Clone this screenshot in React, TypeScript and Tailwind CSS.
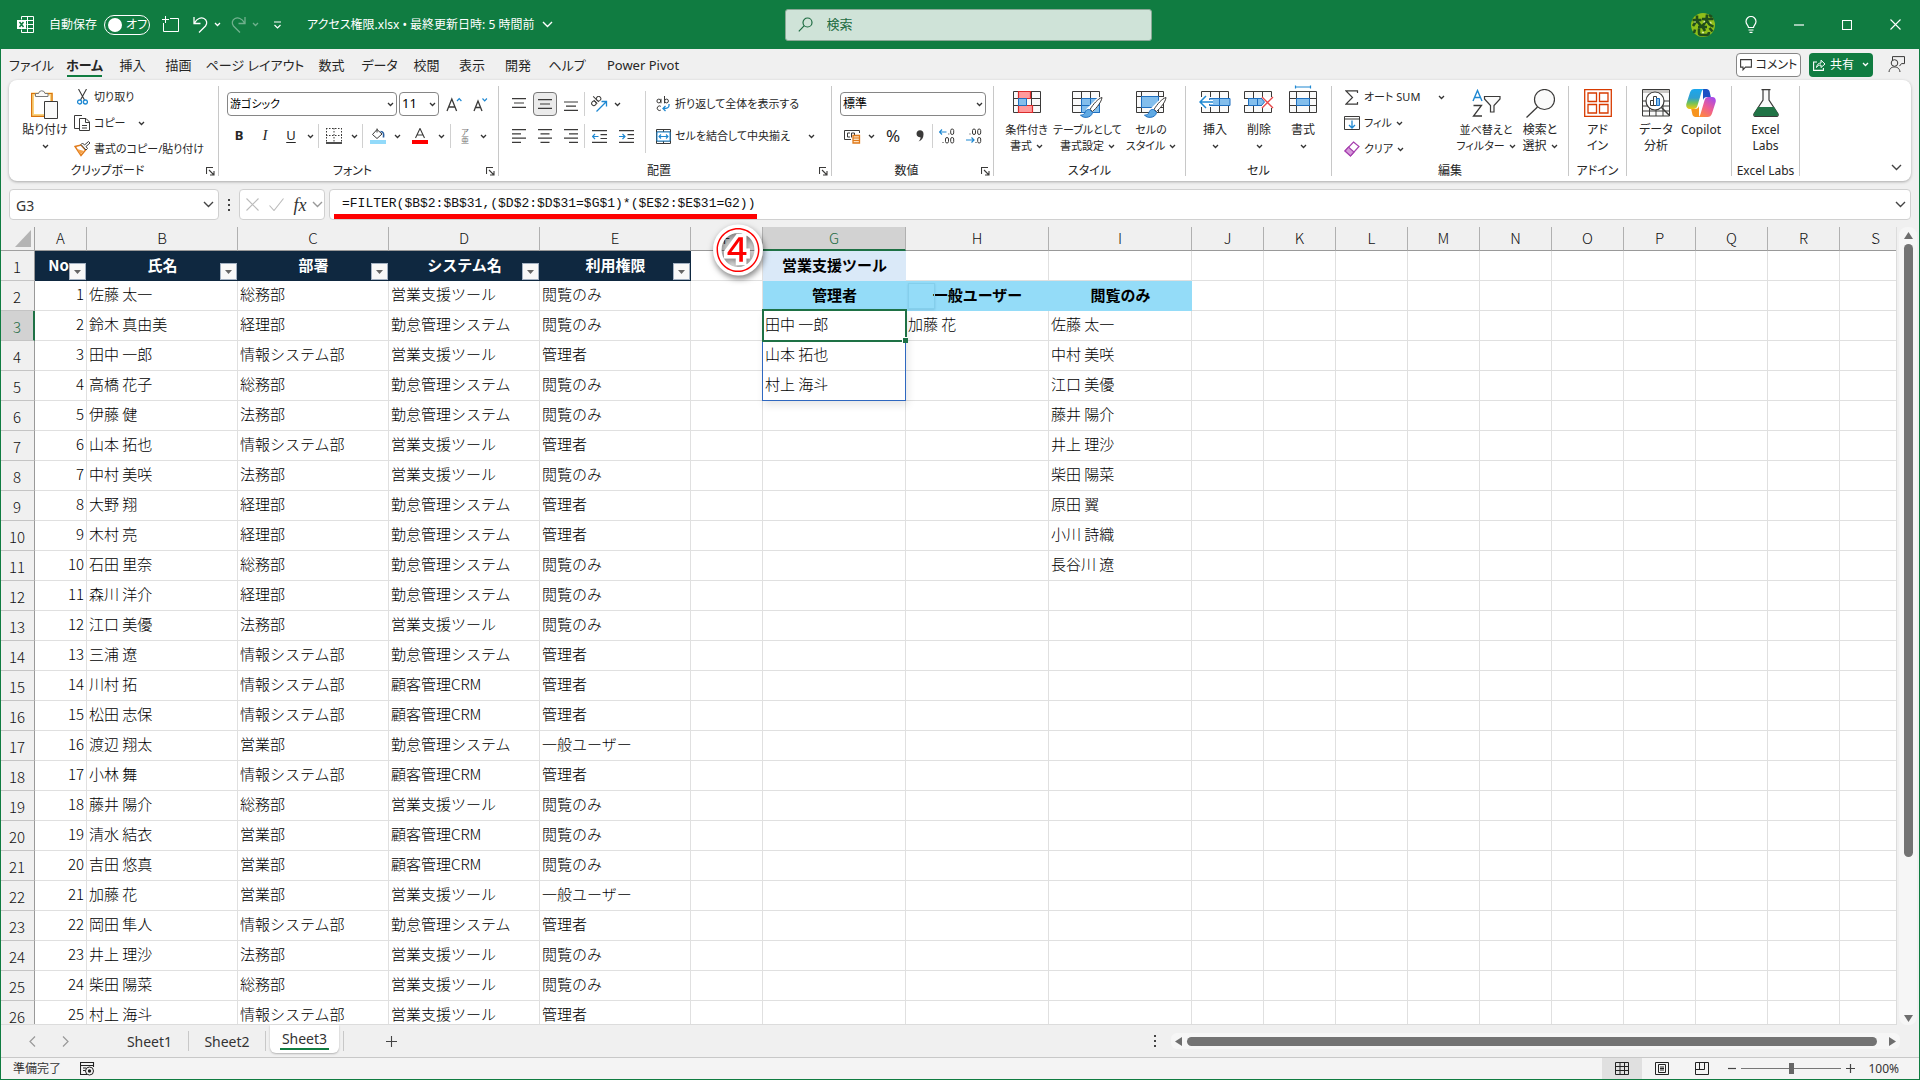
import React from "react";

type Kids = { children?: React.ReactNode };

/* ---------- icons ---------- */

function Svg({ w, h, children, className = "" }: { w: number; h: number; className?: string } & Kids) {
  return (
    <svg width={w} height={h} viewBox={`0 0 ${w} ${h}`} fill="none" className={`shrink-0 ${className}`} aria-hidden="true">
      {children}
    </svg>
  );
}

const INK = "#3b3a39";
const BLUE = "#1e88d2";

function Chev({ className = "text-[#333]" }: { className?: string }) {
  return (
    <Svg w={7} h={5} className={className}>
      <path d="M1 1l2.5 2.5L6 1" stroke="currentColor" strokeWidth="1.3" />
    </Svg>
  );
}

function WideChev({ className = "text-[#444]" }: { className?: string }) {
  return (
    <Svg w={11} h={7} className={className}>
      <path d="M1 1l4.5 4.5L10 1" stroke="currentColor" strokeWidth="1.4" />
    </Svg>
  );
}

const ExcelLogo = () => (
  <Svg w={17} h={17}>
    <path d="M4.5 3.5V.5h12v16h-12v-3M10.500 .5v16M4.500 4.500h12M9.500 8.500h7M9.500 12.500h7" stroke="#fff" />
    <path d="M0 4h9v9H0z" fill="#fff" />
    <path d="M2.500 6l4 5M6.500 6l-4 5" stroke="#107c41" strokeWidth="1.500" />
  </Svg>
);
const NewWindow = () => (
  <Svg w={17} h={17}>
    <path d="M8 2.500h8.500v13h-15V7M3.500 0v7M0 3.500h7" stroke="#fff" />
  </Svg>
);
const Undo = ({ flip = false }: { flip?: boolean }) => (
  <Svg w={15} h={17} className={flip ? "-scale-x-100 opacity-40" : ""}>
    <path d="M1 1v6.500h6.500M1.500 7C4 2.500 8 1 11 2.500c3 1.500 3.500 5 1.500 7.500L6 16.500" stroke="#fff" strokeWidth="1.300" />
  </Svg>
);
const Bulb = () => (
  <Svg w={12} h={17}>
    <path d="M3.500 11.500C3.500 9.500 1 8.500 1 5.500a5 5 0 0110 0c0 3-2.500 4-2.500 6zM3.500 14h5M4.500 16.300h3" stroke="#fff" strokeWidth="1.200" />
  </Svg>
);
const SearchGlyph = () => (
  <Svg w={15} h={15}>
    <circle cx="9.500" cy="5.500" r="4.500" stroke="#1d6b41" strokeWidth="1.200" />
    <path d="M6.300 8.700L.8 14.300" stroke="#1d6b41" strokeWidth="1.200" />
  </Svg>
);
const Paste = () => (
  <Svg w={28} h={30}>
    <path d="M1.500 5h19v21.500h-19z" fill="#fff" stroke="#f9d27e" strokeWidth="3" />
    <path d="M.6 4.500h21M.6 27.400h13M.6 4v24M21 4v8" stroke="#d9730d" strokeWidth="1.200" />
    <path d="M4.500 7.500V4.500h3a3.300 3.300 0 016.500 0h3v3z" fill="#fafafa" stroke="#7a7a7a" />
    <path d="M13.500 12.500h13v17h-13z" fill="#fafafa" stroke={INK} />
  </Svg>
);
const Cut = () => (
  <Svg w={11} h={16}>
    <path d="M1.500 0l6 11M9.500 0l-6 11" stroke={INK} strokeWidth="1.100" />
    <circle cx="2.600" cy="13" r="2" stroke={BLUE} strokeWidth="1.300" />
    <circle cx="8.400" cy="13" r="2" stroke={BLUE} strokeWidth="1.300" />
  </Svg>
);
const Copy = () => (
  <Svg w={17} h={17}>
    <path d="M5 13.500H.5V.500H8" stroke={INK} />
    <path d="M5.500 3.500H12l3.500 3.500v8.500h-10zM11.500 3.500v4h4M8 10.500h5M8 13h5" stroke={INK} />
  </Svg>
);
const Painter = () => (
  <Svg w={17} h={16}>
    <path d="M1 5.500l6-1.500 4.500 5L7 14.500z" fill="#fff" stroke="#e07a1a" strokeWidth="1.500" />
    <path d="M3 8l3.500 5.500L10 10z" fill="#f5a34a" />
    <path d="M7 3.500l5 5.500 1.500-1.500-1.500-2L16 2 14.500.500 10.500 4 8.500 2z" fill="#fff" stroke={INK} />
  </Svg>
);
const Launcher = () => (
  <Svg w={9} h={9}>
    <path d="M.5 7V.5H7M3 3l4.500 4.500M8 4v4H4" stroke={INK} strokeWidth="1.100" />
  </Svg>
);
const Borders = () => (
  <Svg w={16} h={16}>
    <path d="M0 .5h16M.5 0v14M15.500 0v14M8 0v14M0 7.500h16" stroke={INK} strokeDasharray="1.500 1.500" />
    <path d="M0 15h16" stroke="#222" strokeWidth="1.600" />
  </Svg>
);
const Fill = () => (
  <Svg w={16} h={16}>
    <path d="M7 1.500l5 4.500-5 4.500-4.500-4zM7 .5v4" stroke={INK} />
    <path d="M10.500 3.500c3 0 3.500 2 3 6" stroke="#2b5f9e" strokeWidth="1.600" />
    <path d="M0 12h16v4H0z" fill="#92dafa" />
  </Svg>
);
const FontColor = () => (
  <Svg w={16} h={16}>
    <path d="M3.500 10L8 .5l4.500 9.500M5 7h6" stroke={INK} strokeWidth="1.100" />
    <path d="M0 12h16v4H0z" fill="#f00" />
  </Svg>
);

function Lines({ d }: { d: string }) {
  return (
    <Svg w={14} h={14}>
      <path d={d} stroke={INK} strokeWidth="1.200" />
    </Svg>
  );
}
const Orient = () => (
  <Svg w={17} h={16}>
    <g transform="rotate(-45 5 6)" stroke={INK}>
      <circle cx="2.500" cy="5.500" r="2.200" />
      <path d="M4.800 3v5M7 0v8" />
      <circle cx="9.200" cy="5.500" r="2.200" />
    </g>
    <path d="M5.500 15.500L15 6M10.500 5.500h5v5" stroke={BLUE} strokeWidth="1.300" />
  </Svg>
);
const Indent = ({ right = false }: { right?: boolean }) => (
  <Svg w={15} h={13}>
    <path d="M0 .6h15M8.500 4.600H15M8.500 8.500H15M0 12.400h15" stroke={INK} strokeWidth="1.200" />
    <path d={right ? "M0 6.500h6M3.500 4l2.500 2.500L3.500 9" : "M.5 6.500h6M3 4L.5 6.500 3 9"} stroke={BLUE} strokeWidth="1.200" />
  </Svg>
);
const Wrap = () => (
  <Svg w={14} h={16}>
    <circle cx="2.800" cy="5" r="1.900" stroke={INK} />
    <path d="M5 2.800v4.500M8.500 0v7.300" stroke={INK} />
    <circle cx="10.500" cy="5" r="1.900" stroke={INK} />
    <path d="M4.800 10.300a2.300 2.300 0 100 3.800" stroke={INK} />
    <path d="M13 8c.5 4-2 4.500-6 4.500M9.500 10L7 12.500 9.500 15" stroke={BLUE} strokeWidth="1.300" />
  </Svg>
);
const Merge = () => (
  <Svg w={15} h={15}>
    <path d="M.5.5h14v14H.5zM7.500 0v3M7.500 12v3M0 3h15M0 12h15" stroke={INK} />
    <path d="M1 3h13v9H1z" fill="#fff" stroke={BLUE} />
    <path d="M3 7.500h9M5 5.500l-2 2 2 2M10 5.500l2 2-2 2" stroke={BLUE} strokeWidth="1.100" />
  </Svg>
);
const Currency = () => (
  <Svg w={17} h={15}>
    <path d="M7 10.500H.5v-9h15V4" stroke={INK} />
    <path d="M6 4H3.500v4H6M7.500 8.500V4h3v2.500" stroke={INK} />
    <path d="M9 6.500h6.500v7.500H9z" fill="#fde0bf" stroke="#e07a1a" strokeWidth="1.300" />
    <path d="M9 9h6.500M9 11.500h6.500" stroke="#e07a1a" strokeWidth="1.200" />
  </Svg>
);
const Decimals = ({ less = false }: { less?: boolean }) => (
  <svg width="16" height="16" viewBox="0 0 16 16" fill="none" className="shrink-0" aria-hidden="true">
    <path d={less ? "M0 12h8M5.500 9.500L8 12l-2.500 2.500" : "M.5 4h7M3 1.500L.5 4 3 6.500"} stroke={BLUE} strokeWidth="1.200" />
    <g stroke={INK}>
      {less ? (
        <>
          <rect x="6.500" y="1" width="3" height="5.500" rx="1.500" />
          <rect x="11.700" y="1" width="3" height="5.500" rx="1.500" />
          <rect x="11.700" y="9.500" width="3" height="5.500" rx="1.500" />
        </>
      ) : (
        <>
          <rect x="11.700" y="1" width="3" height="5.500" rx="1.500" />
          <rect x="6.500" y="9.500" width="3" height="5.500" rx="1.500" />
          <rect x="11.700" y="9.500" width="3" height="5.500" rx="1.500" />
        </>
      )}
    </g>
    <path d={less ? "M3.500 6h1M9.500 14.500h1" : "M9.300 6h1M3.500 14.500h1"} stroke={INK} strokeWidth="1.200" />
  </svg>
);

const GRID = "M.5 2.500h27v21H.5zM0 9.500h28M0 16.500h28M9.500 2.500v21M18.500 2.500v21";
const CondFormat = () => (
  <Svg w={28} h={28}>
    <path d={GRID} fill="#fafafa" stroke={INK} />
    <path d="M5.500 2.500h12v7h-12zM5.500 16.500h14v7h-14z" fill="#ff9a9c" stroke="#d92c2c" strokeWidth="1.200" />
    <path d="M5.500 9.500h8v7h-8z" fill="#83beec" stroke="#1e6fc0" />
  </Svg>
);
const Brush = () => (
  <>
    <path d="M29 9.500L19 23l-3-2.500L26.500 10z" fill="#fff" stroke="#fff" strokeWidth="3" />
    <path d="M30 8.500c-4 1-9 7-12 12l2.500 2C24.500 19 29.500 13 30 8.500z" fill="#fff" stroke={INK} />
    <path d="M17.500 20.500c-4-.5-4 2.500-5 4-1 1.200-2.500 1.500-4 1.500 2 3.500 11 3.500 12-2.500z" fill="#5fa9e3" stroke="#1e6fc0" />
  </>
);
const TableFormat = () => (
  <Svg w={31} h={30}>
    <path d={GRID} fill="#fafafa" stroke={INK} />
    <path d="M9.500 9.500h18v14h-18zM9.500 16.500h18M18.500 9.500v14" fill="#83beec" stroke="#1e6fc0" />
    <Brush />
  </Svg>
);
const CellStyle = () => (
  <Svg w={31} h={30}>
    <path d="M.5 2.500h27v21H.5zM0 7.500h28M0 18.500h28M5.500 2.500v21M22.500 2.500v21" fill="#fafafa" stroke={INK} />
    <path d="M5.500 7.500h17v11h-17z" fill="#83beec" stroke="#1e6fc0" />
    <Brush />
  </Svg>
);
const InsertCells = () => (
  <Svg w={32} h={28}>
    <path d="M2.500 2.500h27v21h-27zM2.500 9.500h27M2.500 16.500h27M11.500 2.500v21M20.500 2.500v21" fill="#fafafa" stroke={INK} />
    <path d="M1 8h12v10H1z" fill="#fff" />
    <path d="M10.500 9.500h20.500v7H10.500zM20.500 9.500v7" fill="#83beec" stroke="#1e6fc0" />
    <path d="M1 13h13M7 7l-6 6 6 6" stroke="#fff" strokeWidth="4" />
    <path d="M1 13h13M7 7l-6 6 6 6" stroke={BLUE} strokeWidth="1.500" />
  </Svg>
);
const DeleteCells = () => (
  <Svg w={30} h={28}>
    <path d="M.5 2.500h27v21H.5zM.5 9.500h27M.5 16.500h27M9.500 2.500v7M18.500 2.500v7M9.500 16.500v7M18.500 16.500v7" fill="#fafafa" stroke={INK} />
    <path d="M0 10h5v6H0zM18 8h12v11H18z" fill="#fff" />
    <path d="M4.500 9.500h13l3 3.500-3 3.500h-13zM13.500 9.500v7" fill="#83beec" stroke="#1e6fc0" />
    <path d="M18 8l11 11M29 8L18 19" stroke="#e8484a" strokeWidth="1.400" />
  </Svg>
);
const FormatCells = () => (
  <Svg w={28} h={32} className="-mt-1">
    <path d="M.5 6.500h27v21H.5zM0 13.500h28M0 20.500h28M7.500 6.500v21M20.500 6.500v21" fill="#fafafa" stroke={INK} />
    <path d="M7.500 13.500h13v7h-13z" fill="#83beec" stroke="#1e6fc0" />
    <path d="M6.500 2h15M6.500 .5v3M21.500 .5v3" stroke={BLUE} strokeWidth="1.200" />
  </Svg>
);
const Sigma = () => (
  <Svg w={14} h={15}>
    <path d="M12.500 3V.8H1L7.500 7.500 1 14.200h11.500V12" stroke={INK} strokeWidth="1.200" />
  </Svg>
);
const FillDown = () => (
  <Svg w={16} h={14}>
    <path d="M.5.5h15v13H.5zM0 3h16" stroke={INK} />
    <path d="M8 4.500v7M5 9l3 3 3-3" stroke={BLUE} strokeWidth="1.300" />
  </Svg>
);
const Eraser = () => (
  <Svg w={16} h={16}>
    <path d="M9.500 1l5.500 4.500L6.500 15 1 10z" fill="#fff" stroke="#a63fae" strokeWidth="1.200" />
    <path d="M1 10l3.500-4 5.500 5-3.500 4z" fill="#d79adb" stroke="#a63fae" strokeWidth="1.200" />
  </Svg>
);
const SortFilter = () => (
  <Svg w={29} h={28}>
    <path d="M1 12L5.500 1.500 10 12M2.500 8.500h6" stroke={BLUE} strokeWidth="1.400" />
    <path d="M1.500 16.500h8L1.500 27h8.500" stroke={INK} strokeWidth="1.300" />
    <path d="M12.500 7.500h15.500v2.500l-6 6.500v6.500h-3.500v-6.500l-6-6.500z" fill="#fafafa" stroke={INK} strokeWidth="1.200" />
  </Svg>
);
const FindBig = () => (
  <Svg w={29} h={29}>
    <circle cx="18.500" cy="10.500" r="10" fill="#fafafa" stroke={INK} strokeWidth="1.200" />
    <path d="M11.500 18L.5 28.500" stroke={INK} strokeWidth="1.300" />
  </Svg>
);
const Addins = () => (
  <Svg w={28} h={28}>
    <path d="M.7.700h26.600v26.600H.7zM4 4h8.500v8.500H4zM15.500 4H24v8.500h-8.500zM4 15.500h8.500V24H4zM15.500 15.500H24V24h-8.500z" stroke="#d83b01" strokeWidth="1.300" />
  </Svg>
);
const Analyze = () => (
  <Svg w={28} h={28}>
    <path d="M.5.5h27v26.500H.5zM.5 12h27M.5 17h27M.5 22h27M7.500 17v10M14 17v10M21 17v10" fill="#fafafa" stroke={INK} />
    <path d="M1 1h26v3H1z" fill="#c9c7c5" />
    <circle cx="13" cy="12" r="9" fill="#fff" stroke={INK} strokeWidth="1.200" />
    <path d="M8.500 11.500h3v5h-3zM11.500 7.500h3v9h-3z" stroke={INK} />
    <path d="M14.500 9.500h3v7h-3z" fill="#83beec" stroke="#1e6fc0" />
    <path d="M19.500 18.500l8 8" stroke={INK} strokeWidth="1.500" />
  </Svg>
);
const Copilot = () => (
  <svg width="30" height="28" viewBox="0 0 30 28" className="shrink-0" aria-hidden="true">
    <defs>
      <linearGradient id="cpA" x1="0" y1="0" x2="0" y2="1">
        <stop offset="0" stopColor="#1aa7ee" />
        <stop offset=".45" stopColor="#2f9fd0" />
        <stop offset=".7" stopColor="#6fc25a" />
        <stop offset="1" stopColor="#f2c80f" />
      </linearGradient>
      <linearGradient id="cpB" x1=".8" y1="0" x2=".2" y2="1">
        <stop offset="0" stopColor="#a64bea" />
        <stop offset=".5" stopColor="#ee5d93" />
        <stop offset="1" stopColor="#ff8a3c" />
      </linearGradient>
    </defs>
    <path d="M17 0h3.500c1.500 0 2.700 1 3.100 2.500L24.800 8H21c-2 0-3.500 1-4 3z" fill="#1b4fc4" />
    <path d="M8.500 0H18c-1.500.5-2 1.500-2.500 3l-4 13.500c-.5 2-1.800 3.500-4 3.500H3.800C.8 20-.3 17.500.4 14.800L4 3.500C4.800 1 6.300 0 8.500 0z" fill="url(#cpA)" />
    <path d="M21.500 28H12c1.500-.5 2-1.500 2.500-3l4-13.500c.5-2 1.800-3.500 4-3.500h3.700c3 0 4.100 2.500 3.400 5.200L26 24.500c-.8 2.500-2.300 3.500-4.500 3.500z" fill="url(#cpB)" />
    <path d="M13 28H9.500C8 28 6.800 27 6.400 25.500L5.200 20H9c2 0 3.500-1 4-3z" fill="#f7941f" />
  </svg>
);
const Flask = () => (
  <Svg w={26} h={28}>
    <path d="M8.500.6h9M10 1v10L1.200 24.500c-.8 1.500-.3 3 1.300 3h21c1.600 0 2.100-1.500 1.300-3L16 11V1" fill="#fafafa" stroke={INK} strokeWidth="1.200" />
    <path d="M5 18h16l4 6.500c.7 1.500.3 2.500-1.300 2.500H2.300C.7 27 .3 26 1 24.500z" fill="#217346" />
  </Svg>
);
const CommentIcon = () => (
  <Svg w={12} h={12}>
    <path d="M.6.600h10.800v7.500H5.500L3 10.800V8.100H.6z" stroke={INK} strokeWidth="1.100" />
  </Svg>
);
const ShareIcon = () => (
  <Svg w={13} h={12}>
    <path d="M4 3H.6v8.400h9.800V9" stroke="#fff" strokeWidth="1.100" />
    <path d="M3.500 8.500C4 5.500 5.500 4 8 4V1.200L12 5 8 8.500V6C6 6 4.500 6.800 3.500 8.500z" stroke="#fff" />
  </Svg>
);
const Present = () => (
  <Svg w={17} h={17}>
    <path d="M4.500 5V.600h12v7h-3l-2 2.500" stroke={INK} />
    <circle cx="6.500" cy="7" r="3.300" fill="#f0f0f0" stroke={INK} />
    <path d="M1 16c.5-4 3-5 5.500-5s5 1 5.500 5" stroke={INK} />
  </Svg>
);
const Macro = () => (
  <Svg w={15} h={14}>
    <path d="M7 12.500H.5V.5h13V5M0 3.500h14M3 6h3M3 8.500h2" stroke="#222" strokeWidth="1.100" />
    <circle cx="9.500" cy="9" r="4" stroke="#222" />
    <circle cx="9.500" cy="9" r="1.700" fill="#222" />
  </Svg>
);
const Avatar = () => (
  <Svg w={24} h={24}>
    <circle cx="12" cy="12" r="12" fill="#8fbf1a" />
    <g stroke="#1f4d1b" strokeWidth="2.600" strokeLinejoin="round">
      <path d="M1.500 7h9M6 2.500v4.500L2 13M6 8l4 5M11 6h11.500M16 1.500c0 6-2 9-5 12M15.500 6c1 4 3 6.500 7 7.500M18 2l3 2" />
      <path d="M4 16.500l-1 3.500M8 15.500v4.500c0 1.500 1 2 3 2h4.500c2 0 2.500-1 2.500-3M12 14.500l2 3.500M18.500 15l3 3.500M7 14h9" />
    </g>
    <path d="M3.500 9.500l1-1M12.500 9.500l1.500-1.500M19 9l1.500 1.500M11 19.500h2" stroke="#d8eba0" strokeWidth="1.300" />
  </Svg>
);

/* ---------- ribbon parts ---------- */

function Group({ label, launcher = false, className = "", children }: { label?: string; launcher?: boolean; className?: string } & Kids) {
  return (
    <section className={`flex h-[90px] shrink-0 flex-col border-r border-[#c8c8c8] ${className}`}>
      <div className="flex flex-1">{children}</div>
      <div className={`flex h-[10px] items-center leading-none ${launcher ? "pr-[3px]" : ""}`}>
        <span className="flex-1 text-center whitespace-nowrap">{label}</span>
        {launcher && (
          <button aria-label={`${label}の設定`}>
            <Launcher />
          </button>
        )}
      </div>
    </section>
  );
}

function Big({ icon, l1, l2, arrow = false, className = "" }: { icon: React.ReactNode; l1: string; l2?: string; arrow?: boolean; className?: string }) {
  return (
    <button className={`flex flex-col items-center self-start pt-[3px] leading-4 whitespace-nowrap ${className}`}>
      <span className="flex h-7 items-start justify-center">{icon}</span>
      <span className="mt-[5px]">{l1}</span>
      <span className="flex h-4 items-center gap-1">
        {l2}
        {arrow && <Chev />}
      </span>
    </button>
  );
}

function Small({ icon, label, arrow = "" }: { icon: React.ReactNode; label: string; arrow?: string }) {
  return (
    <button className="flex h-[22px] items-center text-[11px] whitespace-nowrap">
      <span className="mr-1 flex w-4 justify-center">{icon}</span>
      {label}
      {arrow && (
        <span className={arrow}>
          <Chev />
        </span>
      )}
    </button>
  );
}

function Tool({ label, className = "w-[26px]", children }: { label: string; className?: string } & Kids) {
  return (
    <button aria-label={label} className={`flex h-6 shrink-0 items-center justify-center ${className}`}>
      {children}
    </button>
  );
}

const Sep = () => <span className="h-6 w-px shrink-0 bg-[#d0d0d0]" />;

function Combo({ label, value, className = "" }: { label: string; value: string; className?: string }) {
  return (
    <span className={`relative block h-6 ${className}`}>
      <select aria-label={label} className="h-full w-full appearance-none rounded border border-[#868686] bg-white pl-[2px] text-black">
        <option>{value}</option>
      </select>
      <span className="pointer-events-none absolute inset-y-0 right-[3px] flex items-center">
        <Chev />
      </span>
    </span>
  );
}

/* ---------- title bar and tabs ---------- */

function TitleBar() {
  return (
    <header className="flex h-[49px] shrink-0 items-center bg-[#107c41] text-xs text-white">
      <div className="flex flex-1 items-center pl-4 whitespace-nowrap">
        <ExcelLogo />
        <label className="ml-[15px] flex items-center gap-[7px]">
          自動保存
          <span className="relative flex h-5 w-[46px] items-center">
            <input type="checkbox" role="switch" className="absolute inset-0 h-5 w-[46px] appearance-none rounded-full border border-white" />
            <span className="ml-1 h-[14px] w-[14px] rounded-full bg-white" />
            <span className="ml-1">オフ</span>
          </span>
        </label>
        <button aria-label="新規ウィンドウ" className="ml-3"><NewWindow /></button>
        <button aria-label="元に戻す" className="ml-[14px] flex items-center gap-[6px]"><Undo /><Chev className="text-white" /></button>
        <button aria-label="やり直し" className="ml-[10px] flex items-center gap-[6px]"><Undo flip /><Chev className="text-white opacity-40" /></button>
        <button aria-label="クイック アクセスのカスタマイズ" className="ml-[14px]">
          <Svg w={9} h={8}><path d="M1 1h7M1.500 4l3 3 3-3" stroke="#fff" strokeWidth="1.200" /></Svg>
        </button>
        <button className="ml-[25px] flex items-center gap-2">アクセス権限.xlsx • 最終更新日時: 5 時間前<WideChev className="text-white" /></button>
      </div>
      <label className="flex h-8 w-[367px] items-center gap-[14px] rounded-[3px] border border-[#8aa896] bg-[#cfe3d8] pl-3">
        <SearchGlyph />
        <input type="search" aria-label="検索" placeholder="検索" className="w-full bg-transparent text-[13px] text-[#1d6b41] outline-none placeholder:text-[#1d6b41] placeholder:opacity-100" />
      </label>
      <div className="flex flex-1 items-center justify-end">
        <button aria-label="アカウント" className="flex w-12 justify-center"><Avatar /></button>
        <button aria-label="ヒント" className="flex w-12 justify-center"><Bulb /></button>
        <button aria-label="最小化" className="flex w-12 justify-center"><Svg w={10} h={10}><path d="M0 5h10" stroke="#fff" strokeWidth="1.200" /></Svg></button>
        <button aria-label="最大化" className="flex w-12 justify-center"><Svg w={10} h={10}><path d="M.5.5h9v9h-9z" stroke="#fff" strokeWidth="1.100" /></Svg></button>
        <button aria-label="閉じる" className="flex w-12 justify-center"><Svg w={11} h={11}><path d="M.5.5l10 10M10.500.5l-10 10" stroke="#fff" strokeWidth="1.100" /></Svg></button>
      </div>
    </header>
  );
}

const TABS: [string, string][] = [
  ["ファイル", "w-[55px]"],
  ["ホーム", "w-[51px]"],
  ["挿入", "w-[45px]"],
  ["描画", "w-[47px]"],
  ["ページ レイアウト", "w-[106px]"],
  ["数式", "w-[47px]"],
  ["データ", "w-[49px]"],
  ["校閲", "w-[45px]"],
  ["表示", "w-[46px]"],
  ["開発", "w-[46px]"],
  ["ヘルプ", "w-[52px]"],
  ["Power Pivot", "w-[100px]"],
];

function TabBar() {
  return (
    <div className="flex h-[31px] shrink-0 items-center pl-[3px] text-[13px]">
      <nav className="flex flex-1 self-stretch">
        {TABS.map(([t, w]) => (
          <button key={t} className={`relative flex items-center justify-center pt-[2px] whitespace-nowrap ${w} ${t === "ホーム" ? "font-bold" : ""}`}>
            {t}
            {t === "ホーム" && <span className="absolute right-2 bottom-[3px] left-2 h-[2px] bg-[#107c41]" />}
          </button>
        ))}
      </nav>
      <button className="flex h-6 w-[65px] items-center justify-center gap-1 rounded border border-[#868686] bg-white text-xs"><CommentIcon />コメント</button>
      <button className="ml-2 flex h-6 w-16 items-center justify-center gap-1 rounded bg-[#107c41] text-xs text-white"><ShareIcon />共有<Chev className="ml-1 text-white" /></button>
      <button aria-label="プレゼンス" className="mr-[14px] ml-[15px]"><Present /></button>
    </div>
  );
}

/* ---------- ribbon ---------- */

function Ribbon() {
  return (
    <div className="mx-2 flex h-[101px] shrink-0 rounded-lg bg-white pt-[6px] text-xs shadow-[0_1px_3px_rgba(0,0,0,0.3)]">
      <Group label="クリップボード" launcher className="w-[210px]">
        <button className="ml-3 flex w-[48px] flex-col items-center self-start pt-[3px] leading-4 whitespace-nowrap">
          <Paste />
          <span className="mt-[3px]">貼り付け</span>
          <span className="flex h-4 items-center"><Chev /></span>
        </button>
        <div className="ml-[5px] flex flex-col gap-1">
          <Small icon={<Cut />} label="切り取り" />
          <Small icon={<Copy />} label="コピー" arrow="ml-3" />
          <Small icon={<Painter />} label="書式のコピー/貼り付け" />
        </div>
      </Group>

      <Group label="フォント" launcher className="w-[280px]">
        <div className="ml-2 flex flex-col gap-2 pt-[6px]">
          <div className="flex">
            <Combo label="フォント名" value="游ゴシック" className="w-[170px] text-[11px]" />
            <Combo label="フォント サイズ" value="11" className="ml-[2px] w-10 text-[13px]" />
            <Tool label="フォント サイズの拡大" className="ml-[2px] w-[26px]">
              <Svg w={16} h={15}><path d="M1 14L5.800 2l4.800 12M2.700 10h6.200" stroke={INK} strokeWidth="1.300" /><path d="M11 4l2.200-2.300L15.400 4" stroke={BLUE} strokeWidth="1.200" /></Svg>
            </Tool>
            <Tool label="フォント サイズの縮小">
              <Svg w={15} h={15}><path d="M1 14l4-10 4 10M2.500 10.500h5" stroke={INK} strokeWidth="1.300" /><path d="M9.500 1.500l2.200 2.300 2.200-2.300" stroke={BLUE} strokeWidth="1.200" /></Svg>
            </Tool>
          </div>
          <div className="flex">
            <Tool label="太字" className="w-6"><span className="text-[13px] font-bold">B</span></Tool>
            <Tool label="斜体" className="w-7"><span className="font-['Liberation_Serif',serif] text-[15px] italic">I</span></Tool>
            <Tool label="下線" className="w-6"><span className="text-[13px] underline underline-offset-2">U</span></Tool>
            <Tool label="下線の種類" className="w-[14px]"><Chev /></Tool>
            <span className="w-px" />
            <Sep />
            <Tool label="罫線" className="w-[30px]"><Borders /></Tool>
            <Tool label="罫線の種類" className="w-[11px]"><Chev /></Tool>
            <span className="w-[2px]" />
            <Sep />
            <Tool label="塗りつぶしの色" className="w-[30px]"><Fill /></Tool>
            <Tool label="塗りつぶしの色の選択" className="w-[9px]"><Chev /></Tool>
            <Tool label="フォントの色" className="w-[36px]"><FontColor /></Tool>
            <Tool label="フォントの色の選択" className="w-[7px]"><Chev /></Tool>
            <span className="w-[5px]" />
            <Sep />
            <Tool label="ふりがな" className="w-7"><span className="flex flex-col text-center text-[8px] leading-[8px] text-[#777]"><span>ア</span><span>亜</span></span></Tool>
            <Tool label="ふりがなの選択" className="w-2"><Chev /></Tool>
          </div>
        </div>
      </Group>

      <Group label="配置" launcher className="w-[333px]">
        <div className="ml-[7px] flex flex-col gap-2 pt-[6px]">
          <div className="flex">
            <Tool label="上揃え"><Lines d="M0 1.600h14M2 6h10M0 10.400h14" /></Tool>
            <Tool label="上下中央揃え"><span className="flex h-6 w-6 items-center justify-center rounded border border-[#777] bg-[#ebebeb]"><Lines d="M0 2.600h14M2 7h10M0 11.400h14" /></span></Tool>
            <Tool label="下揃え"><Lines d="M0 5h14M2 9.200h10M0 13.400h14" /></Tool>
            <Sep />
            <Tool label="方向" className="w-[28px]"><Orient /></Tool>
            <Tool label="方向の選択" className="w-2"><Chev /></Tool>
          </div>
          <div className="flex">
            <Tool label="左揃え"><Lines d="M0 .6h14M0 4.900h9M0 9.100h14M0 13.400h9" /></Tool>
            <Tool label="中央揃え"><Lines d="M0 .6h14M2.500 4.900h9M0 9.100h14M2.500 13.400h9" /></Tool>
            <Tool label="右揃え"><Lines d="M0 .6h14M5 4.900h9M0 9.100h14M5 13.400h9" /></Tool>
            <Sep />
            <Tool label="インデントを減らす" className="w-7"><Indent /></Tool>
            <Tool label="インデントを増やす"><Indent right /></Tool>
          </div>
        </div>
        <div className="mt-[5px] ml-[6px] h-[62px] w-px bg-[#d0d0d0]" />
        <div className="ml-[10px] flex flex-1 flex-col gap-2 pt-[6px] text-[11px]">
          <button className="flex h-6 items-center gap-[5px]"><Wrap />折り返して全体を表示する</button>
          <button className="flex h-6 items-center gap-1 pr-4"><Merge /><span className="flex-1 text-left">セルを結合して中央揃え</span><Chev /></button>
        </div>
      </Group>

      <Group label="数値" launcher className="w-[162px]">
        <div className="ml-2 flex flex-col gap-2 pt-[6px]">
          <Combo label="表示形式" value="標準" className="w-[146px]" />
          <div className="flex">
            <Tool label="通貨表示形式" className="w-6"><Currency /></Tool>
            <Tool label="通貨の選択" className="w-[14px]"><Chev /></Tool>
            <Tool label="パーセント スタイル" className="w-[30px]"><span className="text-[17px]">%</span></Tool>
            <Tool label="桁区切りスタイル" className="w-[24px]"><Svg w={8} h={12}><path d="M7.500 4.500c0 3.500-2 6-5 7 1.500-1.500 2.200-3 2-4.300A3.500 3.500 0 117.500 4z" fill={INK} /></Svg></Tool>
            <Sep />
            <Tool label="小数点以下の表示桁数を増やす" className="w-[28px]"><Decimals /></Tool>
            <Tool label="小数点以下の表示桁数を減らす"><Decimals less /></Tool>
          </div>
        </div>
      </Group>

      <Group label="スタイル" className="w-[192px]">
        <Big className="ml-[3px] w-[59px] text-[11px]" icon={<CondFormat />} l1="条件付き" l2="書式" arrow />
        <Big className="w-[63px] text-[11px]" icon={<TableFormat />} l1="テーブルとして" l2="書式設定" arrow />
        <Big className="w-16 text-[11px]" icon={<CellStyle />} l1="セルの" l2="スタイル" arrow />
      </Group>

      <Group label="セル" className="w-[146px]">
        <Big className="ml-[7px] w-11" icon={<InsertCells />} l1="挿入" arrow />
        <Big className="w-11" icon={<DeleteCells />} l1="削除" arrow />
        <Big className="w-11" icon={<FormatCells />} l1="書式" arrow />
      </Group>

      <Group label="編集" className="w-[237px]">
        <div className="ml-3 flex w-[114px] flex-col items-start gap-1">
          <Small icon={<Sigma />} label="オート SUM" arrow="ml-[18px]" />
          <Small icon={<FillDown />} label="フィル" arrow="ml-1" />
          <Small icon={<Eraser />} label="クリア" arrow="ml-1" />
        </div>
        <Big className="w-14 text-[11px]" icon={<SortFilter />} l1="並べ替えと" l2="フィルター" arrow />
        <Big className="w-[52px]" icon={<FindBig />} l1="検索と" l2="選択" arrow />
      </Group>

      <Group label="アドイン" className="w-[58px]">
        <Big className="flex-1" icon={<Addins />} l1="アド" l2="イン" />
      </Group>

      <Group className="w-[105px]">
        <Big className="ml-[7px] w-11" icon={<Analyze />} l1="データ" l2="分析" />
        <Big className="w-[46px]" icon={<Copilot />} l1="Copilot" />
      </Group>

      <Group label="Excel Labs" className="w-[68px]">
        <Big className="flex-1" icon={<Flask />} l1="Excel" l2="Labs" />
      </Group>

      <button aria-label="リボンを折りたたむ" className="mr-[9px] mb-[10px] ml-auto self-end"><WideChev /></button>
    </div>
  );
}

/* ---------- formula bar ---------- */

function FormulaBar() {
  return (
    <div className="mx-2 mt-2 mb-[7px] flex h-[31px] shrink-0 items-stretch">
      <label className="flex w-[210px] shrink-0 items-center rounded border border-[#d0d0d0] bg-white pr-1 pl-[6px]">
        <input aria-label="名前ボックス" defaultValue="G3" className="w-full min-w-0 bg-transparent pt-[2px] text-sm text-[#333] outline-none" />
        <WideChev />
      </label>
      <span className="flex w-5 flex-col items-center justify-center gap-[3px]">
        <i className="h-[2px] w-[2px] bg-[#444]" /><i className="h-[2px] w-[2px] bg-[#444]" /><i className="h-[2px] w-[2px] bg-[#444]" />
      </span>
      <div className="flex w-[86px] shrink-0 items-center rounded border border-[#d0d0d0] bg-white">
        <button aria-label="キャンセル" className="flex w-6 justify-center"><Svg w={13} h={13}><path d="M.5.5l12 12M12.500.5l-12 12" stroke="#bbb" strokeWidth="1.100" /></Svg></button>
        <button aria-label="入力" className="flex w-6 justify-center"><Svg w={15} h={13}><path d="M.5 7.500l4.500 5L14.500.5" stroke="#bbb" strokeWidth="1.100" /></Svg></button>
        <button aria-label="関数の挿入" className="flex w-6 justify-center font-['Liberation_Serif',serif] text-lg leading-none italic text-[#333]">fx</button>
        <WideChev className="text-[#999]" />
      </div>
      <div className="relative ml-1 flex flex-1 items-center rounded border border-[#d0d0d0] bg-white pr-1 pl-3">
        <input aria-label="数式バー" defaultValue="=FILTER($B$2:$B$31,($D$2:$D$31=$G$1)*($E$2:$E$31=G2))" className="w-full bg-transparent pb-px font-['Liberation_Mono',monospace] text-[13px] text-[#111] outline-none" />
        <WideChev />
        <span className="absolute bottom-0 left-1 h-[5px] w-[423px] bg-[#fe0000]" />
      </div>
    </div>
  );
}

/* ---------- worksheet ---------- */

const SYS = { e: "営業支援ツール", k: "勤怠管理システム", c: "顧客管理CRM" };
const ROLE = { v: "閲覧のみ", a: "管理者", u: "一般ユーザー" };
const DEPT = { s: "総務部", k: "経理部", j: "情報システム部", h: "法務部", e: "営業部" };

const PEOPLE: [string, string, string, string][] = [
  ["佐藤 太一", DEPT.s, SYS.e, ROLE.v],
  ["鈴木 真由美", DEPT.k, SYS.k, ROLE.v],
  ["田中 一郎", DEPT.j, SYS.e, ROLE.a],
  ["高橋 花子", DEPT.s, SYS.k, ROLE.v],
  ["伊藤 健", DEPT.h, SYS.k, ROLE.v],
  ["山本 拓也", DEPT.j, SYS.e, ROLE.a],
  ["中村 美咲", DEPT.h, SYS.e, ROLE.v],
  ["大野 翔", DEPT.k, SYS.k, ROLE.a],
  ["木村 亮", DEPT.k, SYS.k, ROLE.a],
  ["石田 里奈", DEPT.s, SYS.k, ROLE.v],
  ["森川 洋介", DEPT.k, SYS.k, ROLE.v],
  ["江口 美優", DEPT.h, SYS.e, ROLE.v],
  ["三浦 遼", DEPT.j, SYS.k, ROLE.a],
  ["川村 拓", DEPT.j, SYS.c, ROLE.a],
  ["松田 志保", DEPT.j, SYS.c, ROLE.a],
  ["渡辺 翔太", DEPT.e, SYS.k, ROLE.u],
  ["小林 舞", DEPT.j, SYS.c, ROLE.a],
  ["藤井 陽介", DEPT.s, SYS.e, ROLE.v],
  ["清水 結衣", DEPT.e, SYS.c, ROLE.v],
  ["吉田 悠真", DEPT.e, SYS.c, ROLE.v],
  ["加藤 花", DEPT.e, SYS.e, ROLE.u],
  ["岡田 隼人", DEPT.j, SYS.k, ROLE.a],
  ["井上 理沙", DEPT.h, SYS.e, ROLE.v],
  ["柴田 陽菜", DEPT.s, SYS.e, ROLE.v],
  ["村上 海斗", DEPT.j, SYS.e, ROLE.a],
];
const ADMINS = ["田中 一郎", "山本 拓也", "村上 海斗"];
const USERS = ["加藤 花"];
const VIEWERS = ["佐藤 太一", "中村 美咲", "江口 美優", "藤井 陽介", "井上 理沙", "柴田 陽菜", "原田 翼", "小川 詩織", "長谷川 遼"];

const COLS: [string, string][] = [
  ["A", "w-[52px]"], ["B", "w-[151px]"], ["C", "w-[151px]"], ["D", "w-[151px]"], ["E", "w-[151px]"],
  ["F", "w-[72px]"], ["G", "w-[143px]"], ["H", "w-[143px]"], ["I", "w-[143px]"],
  ["J", "w-[72px]"], ["K", "w-[72px]"], ["L", "w-[72px]"], ["M", "w-[72px]"], ["N", "w-[72px]"],
  ["O", "w-[72px]"], ["P", "w-[72px]"], ["Q", "w-[72px]"], ["R", "w-[72px]"], ["S", "w-[72px]"],
];
const HEADS = ["No.", "氏名", "部署", "システム名", "利用権限"];

function cellText(row: number, col: string): string {
  if (row === 1) return col === "G" ? SYS.e : (HEADS["ABCDE".indexOf(col)] ?? "");
  const i = "ABCDE".indexOf(col);
  if (i === 0) return String(row - 1);
  if (i > 0) return PEOPLE[row - 2][i - 1];
  if (row === 2) return ({ G: ROLE.a, H: ROLE.u, I: ROLE.v } as Record<string, string>)[col] ?? "";
  const list = ({ G: ADMINS, H: USERS, I: VIEWERS } as Record<string, string[]>)[col];
  return list?.[row - 3] ?? "";
}

function cellClass(row: number, col: string): string {
  const line = "border-r border-b border-[#e0e0e0]";
  if (row === 1 && "ABCDE".includes(col)) return "bg-[#0f2840] text-center font-bold text-white";
  if (row === 1 && col === "G") return "bg-[#dae9f8] text-center font-bold text-black";
  if (row === 2 && "GHI".includes(col)) return "bg-[#94dcf8] text-center font-bold text-black";
  if (col === "A") return `${line} text-right font-light text-black`;
  return `${line} text-left font-light text-black`;
}

function Cell({ row, col }: { row: number; col: string }) {
  const filter = row === 1 && "ABCDE".includes(col);
  return (
    <td className={`relative h-[30px] p-0 pr-[2px] pb-[3px] pl-[2px] leading-5 whitespace-nowrap ${cellClass(row, col)}`}>
      {cellText(row, col)}
      {filter && (
        <button aria-label="フィルター" className="absolute right-[1px] bottom-[1px] flex h-[17px] w-[17px] items-center justify-center border border-[#a3b1c2] bg-[#f8f8f8]">
          <Svg w={7} h={4}><path d="M0 0h7L3.500 4z" fill="#666" /></Svg>
        </button>
      )}
      {row === 2 && col === "H" && <span className="absolute top-[2px] left-[2px] h-[26px] w-[27px] border border-[#84cfec] shadow-[0_1px_2px_rgba(0,60,100,0.15)]" />}
      {row === 3 && col === "G" && (
        <>
          <span className="absolute -right-[1px] -bottom-[61px] -left-[1px] z-10 h-[91px] border border-[#2f68c0] shadow-[2px_4px_8px_rgba(0,0,0,0.1)]" />
          <span className="absolute -top-[2px] -right-[2px] -bottom-[2px] -left-[1px] z-10 border-2 border-[#1e7145]" />
          <span className="absolute -right-[3px] -bottom-[3px] z-10 h-[6px] w-[6px] border-t border-l border-white bg-[#1e7145]" />
        </>
      )}
    </td>
  );
}

function Sheet() {
  const rows = Array.from({ length: 26 }, (_, i) => i + 1);
  return (
    <div className="relative flex min-h-0 flex-1">
      <div className="min-w-0 flex-1 overflow-hidden border-r border-b border-[#dcdcdc] bg-white">
        <table className="w-[1911px] table-fixed border-separate border-spacing-0 font-['Noto_Sans_CJK_JP',sans-serif] text-[15px] [font-feature-settings:normal]">
          <thead>
            <tr>
              <th className="h-6 w-[34px] border-r border-b border-[#a0a0a0] bg-[#f0f0f0] p-0">
                <Svg w={16} h={17} className="mr-[3px] ml-auto"><path d="M16 0v17H0z" fill="#b4b4b4" /></Svg>
              </th>
              {COLS.map(([c, w]) => (
                <th
                  key={c}
                  className={`h-6 border-r border-r-[#b0b0b0] p-0 leading-5 font-light ${w} ${
                    c === "G" ? "border-b-2 border-b-[#1e7145] bg-[#d2d2d2] text-[#1e6b43]" : "border-b border-b-[#999] bg-[#f0f0f0] pb-px text-[#111]"
                  }`}
                >
                  {c}
                </th>
              ))}
            </tr>
          </thead>
          <tbody>
            {rows.map((r) => (
              <tr key={r}>
                <th
                  className={`h-[30px] border-b border-b-[#c4c4c4] p-0 pt-[3px] leading-5 font-light ${
                    r === 3 ? "border-r-2 border-r-[#1e7145] bg-[#d2d2d2] text-[#1e6b43]" : "border-r border-r-[#999] bg-[#f0f0f0] pr-px text-[#111]"
                  }`}
                >
                  {r}
                </th>
                {COLS.map(([c]) => (
                  <Cell key={c} row={r} col={c} />
                ))}
              </tr>
            ))}
          </tbody>
        </table>
      </div>
      <span className="absolute -top-[6px] left-[711px] z-20 flex h-[52px] w-[52px] items-center justify-center font-['Noto_Sans_CJK_JP',sans-serif] text-[46px] leading-none text-[#fe0000] drop-shadow-[1px_3px_3px_rgba(0,0,0,0.5)] [-webkit-text-stroke:7px_white] [paint-order:stroke_fill]">
        ④
      </span>
      <div className="mx-[2px] flex w-[18px] shrink-0 flex-col items-center rounded-lg bg-[#f6f6f6] pt-[5px]">
        <Svg w={9} h={7}><path d="M4.500 0L9 7H0z" fill="#6e6e6e" /></Svg>
        <span className="mt-[5px] h-[613px] w-[9px] rounded-full bg-[#737373]" />
        <Svg w={9} h={7} className="mt-auto mb-[3px]"><path d="M4.500 7L9 0H0z" fill="#6e6e6e" /></Svg>
      </div>
    </div>
  );
}

/* ---------- bottom bars ---------- */

function SheetTabs() {
  return (
    <div className="flex h-8 shrink-0 items-center text-sm text-[#333]">
      <button aria-label="前のシート" className="ml-7"><Svg w={7} h={11}><path d="M6 .5l-5 5 5 5" stroke="#999" strokeWidth="1.200" /></Svg></button>
      <button aria-label="次のシート" className="ml-[26px]"><Svg w={7} h={11}><path d="M1 .5l5 5-5 5" stroke="#999" strokeWidth="1.200" /></Svg></button>
      <nav className="ml-[42px] flex h-full items-center">
        <button className="h-5 w-[78px] border-r border-[#c8c8c8] leading-[22px]">Sheet1</button>
        <button className="h-5 w-[77px] border-r border-[#c8c8c8] leading-[22px]">Sheet2</button>
        <button className="ml-1 flex h-7 w-[69px] justify-center self-start rounded-b-md bg-white shadow-[0_1px_2px_rgba(0,0,0,0.25)]">
          <span className="h-[25px] border-b-2 border-[#107c41] px-[2px] leading-7">Sheet3</span>
        </button>
        <span className="ml-1 h-5 w-px bg-[#c8c8c8]" />
      </nav>
      <button aria-label="新しいシート" className="ml-[42px]"><Svg w={11} h={11}><path d="M5.500 0v11M0 5.500h11" stroke="#444" strokeWidth="1.100" /></Svg></button>
      <span className="ml-auto flex w-8 flex-col items-center gap-[3px]">
        <i className="h-[2px] w-[2px] bg-[#444]" /><i className="h-[2px] w-[2px] bg-[#444]" /><i className="h-[2px] w-[2px] bg-[#444]" />
      </span>
      <div className="mr-[19px] flex h-4 w-[38%] items-center rounded-md bg-[#f6f6f6] px-1">
        <Svg w={7} h={9}><path d="M0 4.500L7 0v9z" fill="#6e6e6e" /></Svg>
        <span className="mr-[12px] ml-[5px] h-[9px] flex-1 rounded-full bg-[#737373]" />
        <Svg w={7} h={9}><path d="M7 4.500L0 0v9z" fill="#6e6e6e" /></Svg>
      </div>
    </div>
  );
}

function StatusBar() {
  return (
    <footer className="flex h-[22px] shrink-0 items-center border-t border-[#c8c8c8] bg-[#f4f4f4] text-xs text-[#333]">
      <span className="ml-3">準備完了</span>
      <button aria-label="マクロの記録" className="ml-[19px]"><Macro /></button>
      <div className="mr-[20px] ml-auto flex h-full items-center">
        <button aria-label="標準" className="flex h-full w-10 items-center justify-center bg-[#e0e0e0]"><Svg w={14} h={13}><path d="M.5.5h13v12H.5zM0 4.500h14M0 8.500h14M5 0v13M9.500 0v13" stroke="#222" /></Svg></button>
        <button aria-label="ページ レイアウト" className="flex h-full w-10 items-center justify-center"><Svg w={14} h={13}><path d="M.5.5h13v12H.5zM3.500 2.500h7v8h-7zM5 5h4M5 6.500h4M5 8h4" stroke="#222" /></Svg></button>
        <button aria-label="改ページ プレビュー" className="flex h-full w-10 items-center justify-center"><Svg w={14} h={13}><path d="M.5.5h13v12H.5zM4.500 0v7.500h5V0M0 7.500h5M9.500 0v7" stroke="#222" /></Svg></button>
        <button aria-label="縮小" className="ml-[6px]"><Svg w={8} h={9}><path d="M0 4.500h8" stroke="#444" strokeWidth="1.200" /></Svg></button>
        <input
          type="range"
          aria-label="ズーム"
          defaultValue={50}
          className="mx-[5px] h-3 w-[100px] appearance-none bg-[linear-gradient(#777,#777)] bg-[length:100%_1px] bg-center bg-no-repeat [&::-webkit-slider-thumb]:h-[11px] [&::-webkit-slider-thumb]:w-[5px] [&::-webkit-slider-thumb]:appearance-none [&::-webkit-slider-thumb]:bg-[#666]"
        />
        <button aria-label="拡大"><Svg w={9} h={9}><path d="M0 4.500h9M4.500 0v9" stroke="#444" strokeWidth="1.200" /></Svg></button>
        <span className="ml-[13px]">100%</span>
      </div>
    </footer>
  );
}

export default function App() {
  return (
    <div className="flex h-screen flex-col overflow-hidden border-x border-b border-[#107c41] bg-[#f0f0f0] font-['Noto_Sans','Noto_Sans_CJK_JP',sans-serif] text-[#262626] [font-feature-settings:'palt']">
      <TitleBar />
      <TabBar />
      <Ribbon />
      <FormulaBar />
      <Sheet />
      <SheetTabs />
      <StatusBar />
    </div>
  );
}
